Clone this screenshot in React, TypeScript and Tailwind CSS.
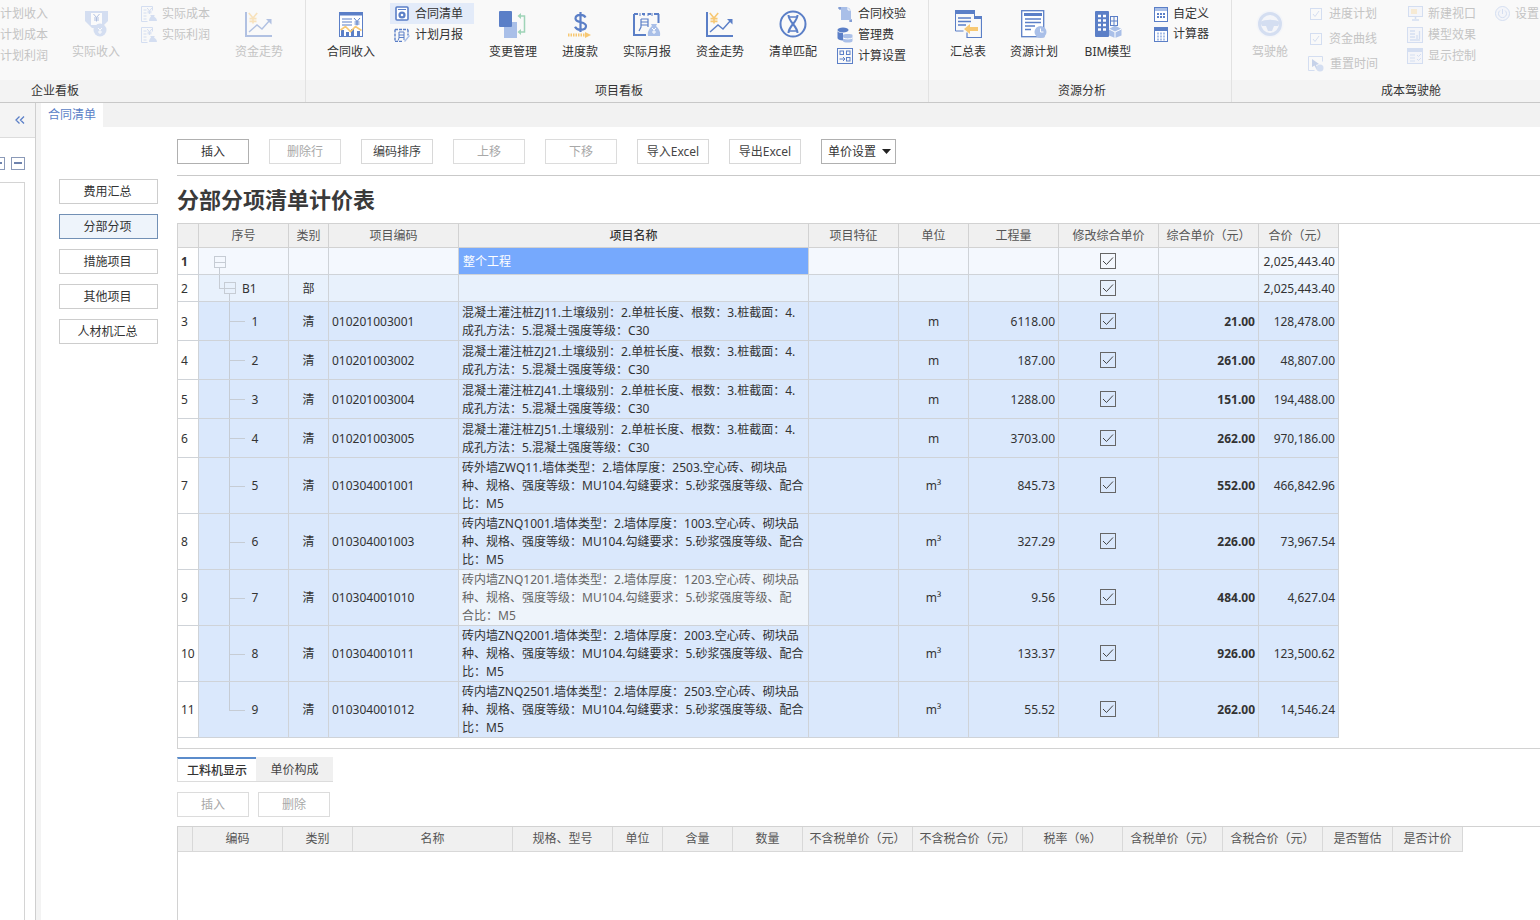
import React from "react";

const B = "#5b7fc7";
const L = "#a9bfe8";
const O = "#f7c873";
const G = "#9fd4b8";

type P = { w: number; h: number; children: React.ReactNode };
const S = ({ w, h, children }: P) => (
  <svg width={w} height={h} viewBox={`0 0 ${w} ${h}`} fill="none" className="block shrink-0">
    {children}
  </svg>
);

const Yen = ({ x, y, c = B, s = 1 }: { x: number; y: number; c?: string; s?: number }) => (
  <path d={`M${x - 3 * s} ${y}l${3 * s} ${3.5 * s}l${3 * s} ${-3.5 * s}M${x} ${y + 3.5 * s}v${4 * s}M${x - 2.5 * s} ${y + 4 * s}h${5 * s}M${x - 2.5 * s} ${y + 6 * s}h${5 * s}`} stroke={c} strokeWidth={s > 1 ? 1.6 : 1} />
);

const ContractIncome = () => (
  <S w={24} h={25}>
    <rect x=".5" y=".5" width="23" height="24" fill="#fff" stroke={B} />
    <rect x="1" y="1" width="22" height="2.5" fill={B} />
    <path d="M3 7h10M3 10h10M3 13h10" stroke={B} />
    <Yen x={18} y={6} />
    <path d="M2 24v-6h3v6zM7 24v-4h3v4zM12 24v-7h3v7zM18 24v-5h3v5z" fill={B} />
    <path d="M1.5 18l5-3.500 5 5 5-5 6 4" stroke={O} strokeWidth="1.600" />
  </S>
);
const ContractList = () => (
  <S w={14} h={15}>
    <rect x="1" y="1" width="12" height="13" rx="1" fill="#fff" stroke={B} strokeWidth="1.600" />
    <path d="M3 3.500h8" stroke={B} />
    <circle cx="7" cy="9" r="3.600" fill={B} />
    <circle cx="7" cy="9" r="1.300" fill="#fff" />
  </S>
);
const MonthReport = () => (
  <S w={16} h={15}>
    <path d="M1 2.500h13M1 2.500v12M1 14.500h8M14 2.500v6" stroke={B} strokeWidth="1.400" strokeDasharray="3 1" />
    <path d="M5 5h5v8M5 5v6l-1 2.500M5 8h5M5 10.500h5" stroke={B} />
    <path d="M10 14l5-6 1 1-5 6z" fill={L} />
  </S>
);
const Change = () => (
  <S w={28} h={27}>
    <rect x="5" y="11" width="13" height="16" fill={L} />
    <rect x="0" y="0" width="13" height="16" rx="1" fill={B} />
    <path d="M21 5h4.500v16H21" stroke={G} strokeWidth="1.500" />
    <path d="M22 2l-3.500 3 3.500 3zM22 18l-3.500 3 3.500 3z" fill={G} />
  </S>
);
const Progress = () => (
  <S w={27} h={27}>
    <path d="M18.500 6.500c-1-2-3-2.700-5-2.700-3 0-5 1.500-5 3.700 0 5 10.500 2.500 10.500 7.500 0 2.200-2.200 3.800-5.500 3.800-2.300 0-4.500-1-5.500-3M13.500 1v20" stroke={B} strokeWidth="2.200" />
    <path d="M1 24h17" stroke={O} strokeWidth="3" strokeDasharray="1.500 1" />
    <path d="M18 21l6 3-6 3z" fill={O} />
  </S>
);
const ActualMonth = () => (
  <S w={28} h={25}>
    <path d="M1 2h4M9 2h3M15 2h3M21 2h5M1 2v21h12M25.500 2v9" stroke={B} strokeWidth="2" />
    <path d="M7 1v3M11 1v3M15 1v3M19 1v3" stroke={B} />
    <path d="M8 7h7v8M8 7v8l-2 4M8 10h7M8 13h7" stroke={B} strokeWidth="1.200" />
    <path d="M15 24c-1-5 2-8 4-10l-1-2h6l-1 2c2 2 5 5 4 10z" fill={L} />
    <path d="M19 16l2 2 2-2M21 18v4M19 20h4" stroke="#fff" />
  </S>
);
const Trend = () => (
  <S w={28} h={26}>
    <path d="M1 1v24h26" stroke={B} strokeWidth="2" />
    <Yen x={8} y={2} c={O} s={1.400} />
    <path d="M4 21l8-7 5 4 8-9" stroke={B} strokeWidth="1.400" />
    <path d="M21 8h5.500v5.500z" fill={B} />
  </S>
);
const Dna = () => (
  <S w={28} h={28}>
    <circle cx="14" cy="14" r="12.500" stroke={B} strokeWidth="2" />
    <path d="M9.500 5c0 7 9 11 9 18M18.500 5c0 7-9 11-9 18" stroke={B} strokeWidth="2" />
    <path d="M10 7h8M10 21h8" stroke={B} strokeWidth="1.500" />
  </S>
);
const Check2 = () => (
  <S w={16} h={16}>
    <path d="M3 1v3M14 13v3M1 2h3M12 15h3" stroke={B} />
    <path d="M4 1h7l3 3v10H4z" fill={L} />
    <path d="M11 1v3h3" stroke="#fff" />
  </S>
);
const Db = () => (
  <S w={16} h={16}>
    <ellipse cx="6" cy="3" rx="5.500" ry="2.500" fill={B} />
    <path d="M.5 4v7c0 1.500 2.500 2.500 5.500 2.500V6C3 6 .5 5.200.5 4z" fill={B} />
    <path d="M6 8c0-1.200 9.500-1.200 9.500 0v6c0 2-9.500 2-9.500 0z" fill={L} />
    <path d="M6 11c2 1.200 7.500 1.200 9.500 0" stroke="#fff" />
  </S>
);
const CalcSet = () => (
  <S w={16} h={16}>
    <rect x=".5" y=".5" width="15" height="15" stroke={B} />
    <rect x="3" y="3" width="3.500" height="3.500" stroke={B} />
    <rect x="9.500" y="3" width="3.500" height="3.500" stroke={B} />
    <rect x="9.500" y="9.500" width="3.500" height="3.500" stroke={B} />
    <path d="M2.500 11h5M6 9l2 2-2 2" stroke={B} />
  </S>
);
const Summary = () => (
  <S w={27} h={28}>
    <path d="M.5 1h19v5M.5 1v20h8" stroke={B} />
    <rect x="0" y="0" width="20" height="4" fill={B} />
    <path d="M3 8h13M3 11.500h13M3 15h8" stroke={B} strokeWidth="1.300" />
    <path d="M19 6.500h7.500v21H12v-5" stroke={B} strokeWidth="1.200" />
    <rect x="19" y="6" width="8" height="3" fill={B} />
    <path d="M9 19l6-5v3h8v4h-8v3z" fill={O} />
  </S>
);
const ResPlan = () => (
  <S w={26} h={28}>
    <rect x=".7" y=".7" width="22" height="26" stroke={B} strokeWidth="1.300" fill="#fff" />
    <rect x="3" y="3" width="18" height="3" fill={B} />
    <path d="M4 9h16M4 12.500h16M4 16h10M4 19.500h6" stroke={B} strokeWidth="1.300" />
    <circle cx="19.500" cy="22" r="6" fill={L} />
    <path d="M19.500 18.500V22h3" stroke="#fff" />
  </S>
);
const Bim = () => (
  <S w={27} h={27}>
    <rect x="0" y="0" width="14" height="26" rx="1" fill={B} />
    <path d="M3 5h3M8 5h3M3 9.500h3M8 9.500h3M3 14h3M8 14h3M3 18.500h3M8 18.500h3" stroke="#fff" strokeWidth="2.500" />
    <rect x="15.500" y="5.500" width="7" height="9" stroke={B} />
    <path d="M19 5.500v9M15.500 10h7" stroke={B} />
    <path d="M14 18l6-3.500 6.500 3.500v6.500L20 27l-6-2.500z" fill={L} />
    <path d="M14 18l6 3 6.500-3M20 21v6" stroke="#fff" />
  </S>
);
const Custom = () => (
  <S w={14} h={15}>
    <rect x=".5" y=".5" width="13" height="14" fill="#fff" stroke={B} />
    <rect x="1" y="1" width="12" height="3" fill={L} />
    <path d="M3 7h2M6 7h2M9 7h2M3 10h2M6 10h2M9 10h2" stroke={B} strokeWidth="1.800" />
  </S>
);
const Calc = () => (
  <S w={14} h={15}>
    <rect x=".5" y=".5" width="13" height="14" fill="#fff" stroke={B} />
    <rect x="1" y="1" width="12" height="3" fill={B} />
    <path d="M3 6.500h2M6 6.500h2M9 6.500h2M3 9.500h2M6 9.500h2M9 9.500h2M3 12.500h2M6 12.500h2M9 12.500h2" stroke={L} strokeWidth="1.800" />
  </S>
);
const ActualIncome = () => (
  <S w={23} h={26}>
    <path d="M0 0h23v10l-7 7H7l-7-7z" fill={L} />
    <rect x="6" y="2" width="11" height="12" fill="#fff" />
    <Yen x={11.500} y={3} />
    <circle cx="15" cy="19" r="6.500" fill={L} />
    <path d="M13 17l2 2 2-2M15 19v4M13 21h4" stroke="#fff" />
  </S>
);
const CostDoc = () => (
  <S w={16} h={16}>
    <path d="M.5.5h11v4M.5.5v15h6" stroke={L} />
    <path d="M2.500 4h3M2.500 7h3M2.500 10h3M2.500 13h3" stroke={L} />
    <Yen x={8.500} y={2} c={L} s={.8} />
    <path d="M8 15c0-3 2-4 2-5l-1-1h5l-1 1c0 1 3 2 3 5z" fill={L} />
  </S>
);
const Wheel = () => (
  <S w={28} h={28}>
    <circle cx="14" cy="14" r="13.500" fill="#eef2fb" />
    <circle cx="14" cy="14" r="10.500" stroke={L} strokeWidth="3" />
    <path d="M4 12c5-3 15-3 20 0l-2 4h-4l-2 5h-4l-2-5H6z" fill={L} />
  </S>
);
const Cb = () => (
  <S w={12} h={12}>
    <rect x=".5" y=".5" width="11" height="11" stroke={L} />
    <path d="M3 6l2 2.500L9 3" stroke={L} />
  </S>
);
const Reset = () => (
  <S w={16} h={16}>
    <path d="M.5.5h14v5M.5.5v14h6" stroke={L} />
    <path d="M4 3l7 5-3 1 2 4-1.500 .5-2-4L4 11z" fill={B} opacity=".7" />
    <circle cx="12" cy="12" r="3.500" fill={L} />
  </S>
);
const Monitor = () => (
  <S w={15} h={15}>
    <rect x=".5" y=".5" width="14" height="10" stroke={L} fill="#eef2fb" />
    <rect x="3" y="3" width="6" height="5" fill={O} opacity=".6" />
    <path d="M7.500 11v2M4 14h7" stroke={L} strokeWidth="1.500" />
  </S>
);
const Model = () => (
  <S w={16} h={16}>
    <rect x=".5" y=".5" width="15" height="15" fill="#eef2fb" stroke={L} />
    <path d="M3 4h5M3 7h5M3 10h5M3 13h10M10 8v4M12.500 4v8" stroke={L} strokeWidth="1.300" />
  </S>
);
const Display = () => (
  <S w={16} h={16}>
    <rect x=".5" y=".5" width="15" height="15" fill="#eef2fb" stroke={L} />
    <rect x="1" y="1" width="14" height="3" fill={L} />
    <path d="M3 7h5M3 10h5M3 13h5M10 7l1.500 1.500L14 6M10 11l1.500 1.500L14 10" stroke={L} />
  </S>
);
const Power = () => (
  <S w={15} h={15}>
    <circle cx="7.500" cy="7.500" r="7" fill="#eef2fb" stroke={L} />
    <path d="M7.500 3v5M5 4.500a4 4 0 1 0 5 0" stroke={L} />
  </S>
);

const Big = ({ label, icon, w, off }: { label: string; icon: React.ReactNode; w: number; off?: boolean }) => (
  <div style={{ width: w }} className="shrink-0 flex flex-col items-center">
    <div className={`h-[30px] mt-[9px] flex items-center ${off ? "opacity-45" : ""}`}>{icon}</div>
    <div className={`mt-[5px] leading-[16px] whitespace-nowrap ${off ? "text-[#c4c4c4]" : "text-[#333]"}`}>{label}</div>
  </div>
);

const Small = ({ label, icon, off, on, gap = "gap-[5px]", h = "h-[21px]", inset = "" }: { label: string; icon?: React.ReactNode; off?: boolean; on?: boolean; gap?: string; h?: string; inset?: string }) => (
  <div className={`flex items-center whitespace-nowrap ${h} ${gap} ${inset} ${on ? "bg-[#e3ebf9]" : ""} ${off ? "text-[#c4c4c4]" : "text-[#333]"}`}>
    {icon && <div className={`w-[16px] flex justify-center shrink-0 ${off ? "opacity-45" : ""}`}>{icon}</div>}
    <span>{label}</span>
  </div>
);

const Group = ({ w, label, labelClass, children, last }: { w: number; label: string; labelClass?: string; children: React.ReactNode; last?: boolean }) => (
  <div style={{ width: w }} className={`shrink-0 flex flex-col ${last ? "" : "border-r border-[#e2e2e2]"}`}>
    <div className="h-[80px] flex overflow-hidden">{children}</div>
    <div className={`h-[22px] bg-[#f3f3f3] leading-[21px] text-[#333] ${labelClass ?? "text-center pl-[4px]"}`}>{label}</div>
  </div>
);

const Ribbon = () => (
  <div className="h-[103px] shrink-0 flex bg-[#f9f9f9] border-b border-[#c8c8c8]">
    <Group w={306} label="企业看板" labelClass="pl-[31px]">
      <div className="w-[58px] pt-[3px] shrink-0">
        <Small off label="计划收入" />
        <Small off label="计划成本" />
        <Small off label="计划利润" />
      </div>
      <Big off w={76} label="实际收入" icon={<ActualIncome />} />
      <div className="w-[87px] pt-[3px] pl-[7px] shrink-0">
        <Small off label="实际成本" icon={<CostDoc />} />
        <Small off label="实际利润" icon={<CostDoc />} />
      </div>
      <Big off w={76} label="资金走势" icon={<Trend />} />
    </Group>
    <Group w={623} label="项目看板">
      <div className="w-[7px] shrink-0" />
      <Big w={76} label="合同收入" icon={<ContractIncome />} />
      <div className="w-[85px] pt-[3px] pl-[1px] shrink-0">
        <Small on label="合同清单" icon={<ContractList />} inset="pl-[4px]" />
        <Small label="计划月报" icon={<MonthReport />} inset="pl-[4px]" />
      </div>
      <div className="w-[5px] shrink-0" />
      <Big w={68} label="变更管理" icon={<Change />} />
      <Big w={66} label="进度款" icon={<Progress />} />
      <Big w={68} label="实际月报" icon={<ActualMonth />} />
      <Big w={78} label="资金走势" icon={<Trend />} />
      <Big w={68} label="清单匹配" icon={<Dna />} />
      <div className="w-[91px] pt-[3px] pl-[10px] shrink-0">
        <Small label="合同校验" icon={<Check2 />} />
        <Small label="管理费" icon={<Db />} />
        <Small label="计算设置" icon={<CalcSet />} />
      </div>
    </Group>
    <Group w={303} label="资源分析">
      <div className="w-[6px] shrink-0" />
      <Big w={66} label="汇总表" icon={<Summary />} />
      <Big w={66} label="资源计划" icon={<ResPlan />} />
      <Big w={82} label="BIM模型" icon={<Bim />} />
      <div className="pt-[4px] pl-[4px]">
        <Small label="自定义" icon={<Custom />} gap="gap-[4px]" h="h-[20px]" />
        <Small label="计算器" icon={<Calc />} gap="gap-[4px]" h="h-[20px]" />
      </div>
    </Group>
    <Group w={308} label="成本驾驶舱" labelClass="text-center pl-[50px]" last>
      <Big off w={76} label="驾驶舱" icon={<Wheel />} />
      <div className="w-[99px] pt-[1px] shrink-0">
        <Small off label="进度计划" icon={<Cb />} h="h-[25px]" />
        <Small off label="资金曲线" icon={<Cb />} h="h-[25px]" />
        <Small off label="重置时间" icon={<Reset />} h="h-[25px]" gap="gap-[6px]" />
      </div>
      <div className="w-[87px] pt-[3px] shrink-0">
        <Small off label="新建视口" icon={<Monitor />} />
        <Small off label="模型效果" icon={<Model />} />
        <Small off label="显示控制" icon={<Display />} />
      </div>
      <div className="pt-[3px]">
        <Small off label="设置" icon={<Power />} />
      </div>
    </Group>
  </div>
);

const Sidebar = () => (
  <div className="w-[36px] shrink-0 flex flex-col border-r border-[#cfcfcf] bg-white overflow-hidden">
    <div className="h-[35px] shrink-0 bg-[#f4f4f4] border-b border-[#dcdcdc] flex justify-end items-center pr-[10px]">
      <svg width="10" height="10" viewBox="0 0 10 10" fill="none" className="block">
        <path d="M4.500 1.500L1 5l3.500 3.500M9 1.500L5.500 5 9 8.500" stroke={B} strokeWidth="1.300" />
      </svg>
    </div>
    <div className="h-[44px] shrink-0 flex items-center ml-[-9px] gap-[6px] pt-[6px]">
      <div className="w-[14px] h-[13px] border border-[#8b9ab8] shrink-0 flex items-center justify-center">
        <div className="w-[8px] h-[2px] bg-[#6f83ad]" />
      </div>
      <div className="w-[14px] h-[13px] border border-[#8b9ab8] shrink-0 flex items-center justify-center">
        <div className="w-[8px] h-[2px] bg-[#6f83ad]" />
      </div>
    </div>
    <div className="flex-1 w-[25px] border-t border-r border-[#d4d4d4]" />
  </div>
);

const Btn = ({ children, kind = "normal", w = "w-[72px]" }: { children: React.ReactNode; kind?: "strong" | "normal" | "off"; w?: string }) => {
  const k = { strong: "border-[#b0b0b0] text-[#333]", normal: "border-[#d8d8d8] text-[#444]", off: "border-[#dcdcdc] text-[#a8a8a8]" }[kind];
  return <div className={`${w} h-[25px] border bg-white flex items-center justify-center leading-none shrink-0 whitespace-nowrap ${k}`}>{children}</div>;
};

const SideBtn = ({ label, on }: { label: string; on?: boolean }) => (
  <div className={`w-[99px] h-[25px] border flex items-center justify-center pr-[2px] text-[#333] ${on ? "bg-[#eef4fb] border-[#7290b5]" : "bg-white border-[#cdcdcd]"}`}>{label}</div>
);

const Th = ({ children, strong, w }: { children?: React.ReactNode; strong?: boolean; w?: number }) => (
  <th style={{ width: w }} className={`h-[24px] p-0 bg-[#f0f0f0] border-r border-b border-[#d2d2d2] text-center whitespace-nowrap ${strong ? "font-medium text-[#333]" : "font-normal text-[#555]"}`}>{children}</th>
);

const CheckBox = () => (
  <div className="w-[16px] h-[16px] mx-auto border border-[#666] flex items-center justify-center">
    <svg width="12" height="10" viewBox="0 0 12 10" fill="none" className="block">
      <path d="M1 5l3.500 3.500L11 1.500" stroke="#444" />
    </svg>
  </div>
);

type Row = { n: number; seq: string; kind: string; code: string; name: string[]; unit: string; qty: string; price: string; total: string; h: number };

const cl = "混凝土灌注桩";
const l2 = "成孔方法：5.混凝土强度等级：C30";
const wall2 = "种、规格、强度等级：MU104.勾缝要求：5.砂浆强度等级、配合";
const wall3 = "比：M5";
const rows: Row[] = [
  { n: 3, seq: "1", kind: "清", code: "010201003001", name: [`${cl}ZJ11.土壤级别：2.单桩长度、根数：3.桩截面：4.`, l2], unit: "m", qty: "6118.00", price: "21.00", total: "128,478.00", h: 39 },
  { n: 4, seq: "2", kind: "清", code: "010201003002", name: [`${cl}ZJ21.土壤级别：2.单桩长度、根数：3.桩截面：4.`, l2], unit: "m", qty: "187.00", price: "261.00", total: "48,807.00", h: 39 },
  { n: 5, seq: "3", kind: "清", code: "010201003004", name: [`${cl}ZJ41.土壤级别：2.单桩长度、根数：3.桩截面：4.`, l2], unit: "m", qty: "1288.00", price: "151.00", total: "194,488.00", h: 39 },
  { n: 6, seq: "4", kind: "清", code: "010201003005", name: [`${cl}ZJ51.土壤级别：2.单桩长度、根数：3.桩截面：4.`, l2], unit: "m", qty: "3703.00", price: "262.00", total: "970,186.00", h: 39 },
  { n: 7, seq: "5", kind: "清", code: "010304001001", name: ["砖外墙ZWQ11.墙体类型：2.墙体厚度：2503.空心砖、砌块品", wall2, wall3], unit: "m³", qty: "845.73", price: "552.00", total: "466,842.96", h: 56 },
  { n: 8, seq: "6", kind: "清", code: "010304001003", name: ["砖内墙ZNQ1001.墙体类型：2.墙体厚度：1003.空心砖、砌块品", wall2, wall3], unit: "m³", qty: "327.29", price: "226.00", total: "73,967.54", h: 56 },
  { n: 9, seq: "7", kind: "清", code: "010304001010", name: ["砖内墙ZNQ1201.墙体类型：2.墙体厚度：1203.空心砖、砌块品", "种、规格、强度等级：MU104.勾缝要求：5.砂浆强度等级、配", "合比：M5"], unit: "m³", qty: "9.56", price: "484.00", total: "4,627.04", h: 56 },
  { n: 10, seq: "8", kind: "清", code: "010304001011", name: ["砖内墙ZNQ2001.墙体类型：2.墙体厚度：2003.空心砖、砌块品", wall2, wall3], unit: "m³", qty: "133.37", price: "926.00", total: "123,500.62", h: 56 },
  { n: 11, seq: "9", kind: "清", code: "010304001012", name: ["砖内墙ZNQ2501.墙体类型：2.墙体厚度：2503.空心砖、砌块品", wall2, wall3], unit: "m³", qty: "55.52", price: "262.00", total: "14,546.24", h: 56 },
];

const td = "p-0 border-r border-b border-[#cfd3d8] text-[#333]";
const TREE = "bg-[#c6ccd4]";

const TreeBox = ({ cls }: { cls: string }) => (
  <span className={`absolute w-[12px] h-[12px] border border-[#c6ccd4] ${cls}`}>
    <span className="absolute left-0 right-0 top-[4.5px] h-[1px] bg-[#c6ccd4]" />
  </span>
);

const MainTable = () => (
  <table className="table-fixed border-separate border-spacing-0 w-[1161px] text-[12px]">
    <thead>
      <tr>
        <Th w={21} />
        <Th w={90}>序号</Th>
        <Th w={40}>类别</Th>
        <Th w={130}>项目编码</Th>
        <Th w={350} strong>项目名称</Th>
        <Th w={90}>项目特征</Th>
        <Th w={70}>单位</Th>
        <Th w={90}>工程量</Th>
        <Th w={100}>修改综合单价</Th>
        <Th w={100}>综合单价（元）</Th>
        <Th w={80}>合价（元）</Th>
      </tr>
    </thead>
    <tbody>
      <tr className="bg-[#f4f8fe]">
        <td className={`${td} h-[27px] bg-white pl-[3px] pt-[2px] font-bold`}>1</td>
        <td className={`${td} relative`}>
          <TreeBox cls="left-[15px] top-[8px]" />
          <span className={`absolute left-[20px] top-[20px] bottom-0 w-[1px] ${TREE}`} />
        </td>
        <td className={td} />
        <td className={td} />
        <td className={`${td} bg-[#76a9fd] text-white pl-[4px] pt-[2px]`}>整个工程</td>
        <td className={td} />
        <td className={td} />
        <td className={td} />
        <td className={`${td} pr-[2px]`}><CheckBox /></td>
        <td className={td} />
        <td className={`${td} text-right pr-[3px] pt-[2px]`}>2,025,443.40</td>
      </tr>
      <tr className="bg-[#e8f1fc]">
        <td className={`${td} h-[27px] bg-white pl-[3px] pt-[2px]`}>2</td>
        <td className={`${td} relative pl-[43px] pt-[2px]`}>
          <span className={`absolute left-[20px] top-0 h-[13px] w-[1px] ${TREE}`} />
          <span className={`absolute left-[20px] top-[13px] h-[1px] w-[5px] ${TREE}`} />
          <TreeBox cls="left-[25px] top-[7px]" />
          <span className={`absolute left-[30px] top-[19px] bottom-0 w-[1px] ${TREE}`} />
          B1
        </td>
        <td className={`${td} text-center pt-[2px]`}>部</td>
        <td className={td} />
        <td className={td} />
        <td className={td} />
        <td className={td} />
        <td className={td} />
        <td className={`${td} pr-[2px]`}><CheckBox /></td>
        <td className={td} />
        <td className={`${td} text-right pr-[3px] pt-[2px]`}>2,025,443.40</td>
      </tr>
      {rows.map((r, i) => {
        const nudge = r.h === 39 ? "pt-[2px]" : "";
        return (
          <tr key={r.n} className="bg-[#dae8fc]">
            <td style={{ height: r.h }} className={`${td} bg-white pl-[3px] ${nudge}`}>{r.n}</td>
            <td className={`${td} relative ${nudge}`}>
              <span className={`absolute left-[30px] top-0 w-[1px] ${TREE} ${i === rows.length - 1 ? "h-1/2" : "bottom-0"}`} />
              <span className={`absolute left-[30px] top-1/2 h-[1px] w-[16px] ${TREE}`} />
              <span className="block w-[16px] ml-[48px] text-center">{r.seq}</span>
            </td>
            <td className={`${td} text-center ${nudge}`}>{r.kind}</td>
            <td className={`${td} pl-[3px] ${nudge}`}>{r.code}</td>
            <td className={`${td} pl-[3px] leading-[18px] whitespace-nowrap overflow-hidden ${nudge} ${r.n === 9 ? "bg-[#eef4fb] text-[#666]" : ""}`}>
              {r.name.map((t) => (
                <div key={t}>{t}</div>
              ))}
            </td>
            <td className={td} />
            <td className={`${td} text-center ${nudge}`}>{r.unit}</td>
            <td className={`${td} text-right pr-[3px] ${nudge}`}>{r.qty}</td>
            <td className={`${td} pr-[2px] ${r.h === 56 ? "pb-[2px]" : ""}`}><CheckBox /></td>
            <td className={`${td} text-right pr-[3px] font-bold text-[#222] ${nudge}`}>{r.price}</td>
            <td className={`${td} text-right pr-[3px] ${nudge}`}>{r.total}</td>
          </tr>
        );
      })}
    </tbody>
  </table>
);

const lowerCols: [string, number][] = [
  ["", 15], ["编码", 90], ["类别", 70], ["名称", 160], ["规格、型号", 100], ["单位", 50], ["含量", 70], ["数量", 70],
  ["不含税单价（元）", 110], ["不含税合价（元）", 110], ["税率（%）", 100], ["含税单价（元）", 100], ["含税合价（元）", 100], ["是否暂估", 70], ["是否计价", 70],
];

export default function App() {
  return (
    <div className="w-[1540px] h-[920px] overflow-hidden flex flex-col bg-white text-[12px] font-['Noto_Sans','Noto_Sans_CJK_SC',sans-serif]">
      <Ribbon />
      <div className="flex-1 flex min-h-0">
        <Sidebar />
        <div className="w-[5px] shrink-0 bg-[#f3f3f3]" />
        <div className="flex-1 flex flex-col min-w-0">
          <div className="h-[24px] shrink-0 bg-[#f2f2f2] flex">
            <div className="w-[62px] bg-white text-[#5b7fc7] flex items-center justify-center">合同清单</div>
          </div>
          <div className="flex-1 flex min-h-0">
            <div className="w-[136px] shrink-0 pl-[18px] pt-[52px] flex flex-col gap-[10px]">
              <SideBtn label="费用汇总" />
              <SideBtn on label="分部分项" />
              <SideBtn label="措施项目" />
              <SideBtn label="其他项目" />
              <SideBtn label="人材机汇总" />
            </div>
            <div className="flex-1 flex flex-col min-w-0">
              <div className="h-[49px] shrink-0 pt-[12px] flex gap-[20px] border-b border-[#c9c9c9] items-start">
                <Btn kind="strong">插入</Btn>
                <Btn kind="off">删除行</Btn>
                <Btn>编码排序</Btn>
                <Btn kind="off">上移</Btn>
                <Btn kind="off">下移</Btn>
                <Btn>导入Excel</Btn>
                <Btn>导出Excel</Btn>
                <div className="w-[75px] h-[25px] border border-[#b0b0b0] flex items-center pl-[6px] text-[#333] whitespace-nowrap">
                  单价设置
                  <svg width="9" height="5" viewBox="0 0 9 5" className="block ml-[6px]"><path d="M0 0h9L4.500 5z" fill="#222" /></svg>
                </div>
              </div>
              <div className="h-[47px] shrink-0 flex items-center pb-[2px] text-[22px] font-bold text-[#3a3a3a] leading-none">分部分项清单计价表</div>
              <div className="h-[526px] shrink-0 border-t border-b border-l border-[#d2d2d2]">
                <MainTable />
              </div>
              <div className="pt-[8px] flex shrink-0">
                <div className="w-[79px] h-[25px] pt-[2px] border-t-2 border-t-[#5b8ccb] border-b border-b-[#dcdcdc] border-l border-l-[#dcdcdc] bg-white flex items-center justify-center text-[#333] font-medium">工料机显示</div>
                <div className="w-[77px] h-[25px] pt-[2px] bg-[#f0f0f0] border-b border-[#dcdcdc] flex items-center justify-center text-[#444]">单价构成</div>
              </div>
              <div className="pt-[10px] flex gap-[9px] shrink-0">
                <Btn kind="off">插入</Btn>
                <Btn kind="off">删除</Btn>
              </div>
              <div className="mt-[9px] flex-1 border-t border-l border-[#d2d2d2]">
                <div className="flex h-[25px] w-[1285px]">
                  {lowerCols.map(([t, w], i) => (
                    <div key={i} style={{ width: w }} className="shrink-0 bg-[#f0f0f0] border-r border-b border-[#d8d8d8] flex items-center justify-center text-[#555] whitespace-nowrap">{t}</div>
                  ))}
                </div>
              </div>
            </div>
          </div>
        </div>
      </div>
    </div>
  );
}
